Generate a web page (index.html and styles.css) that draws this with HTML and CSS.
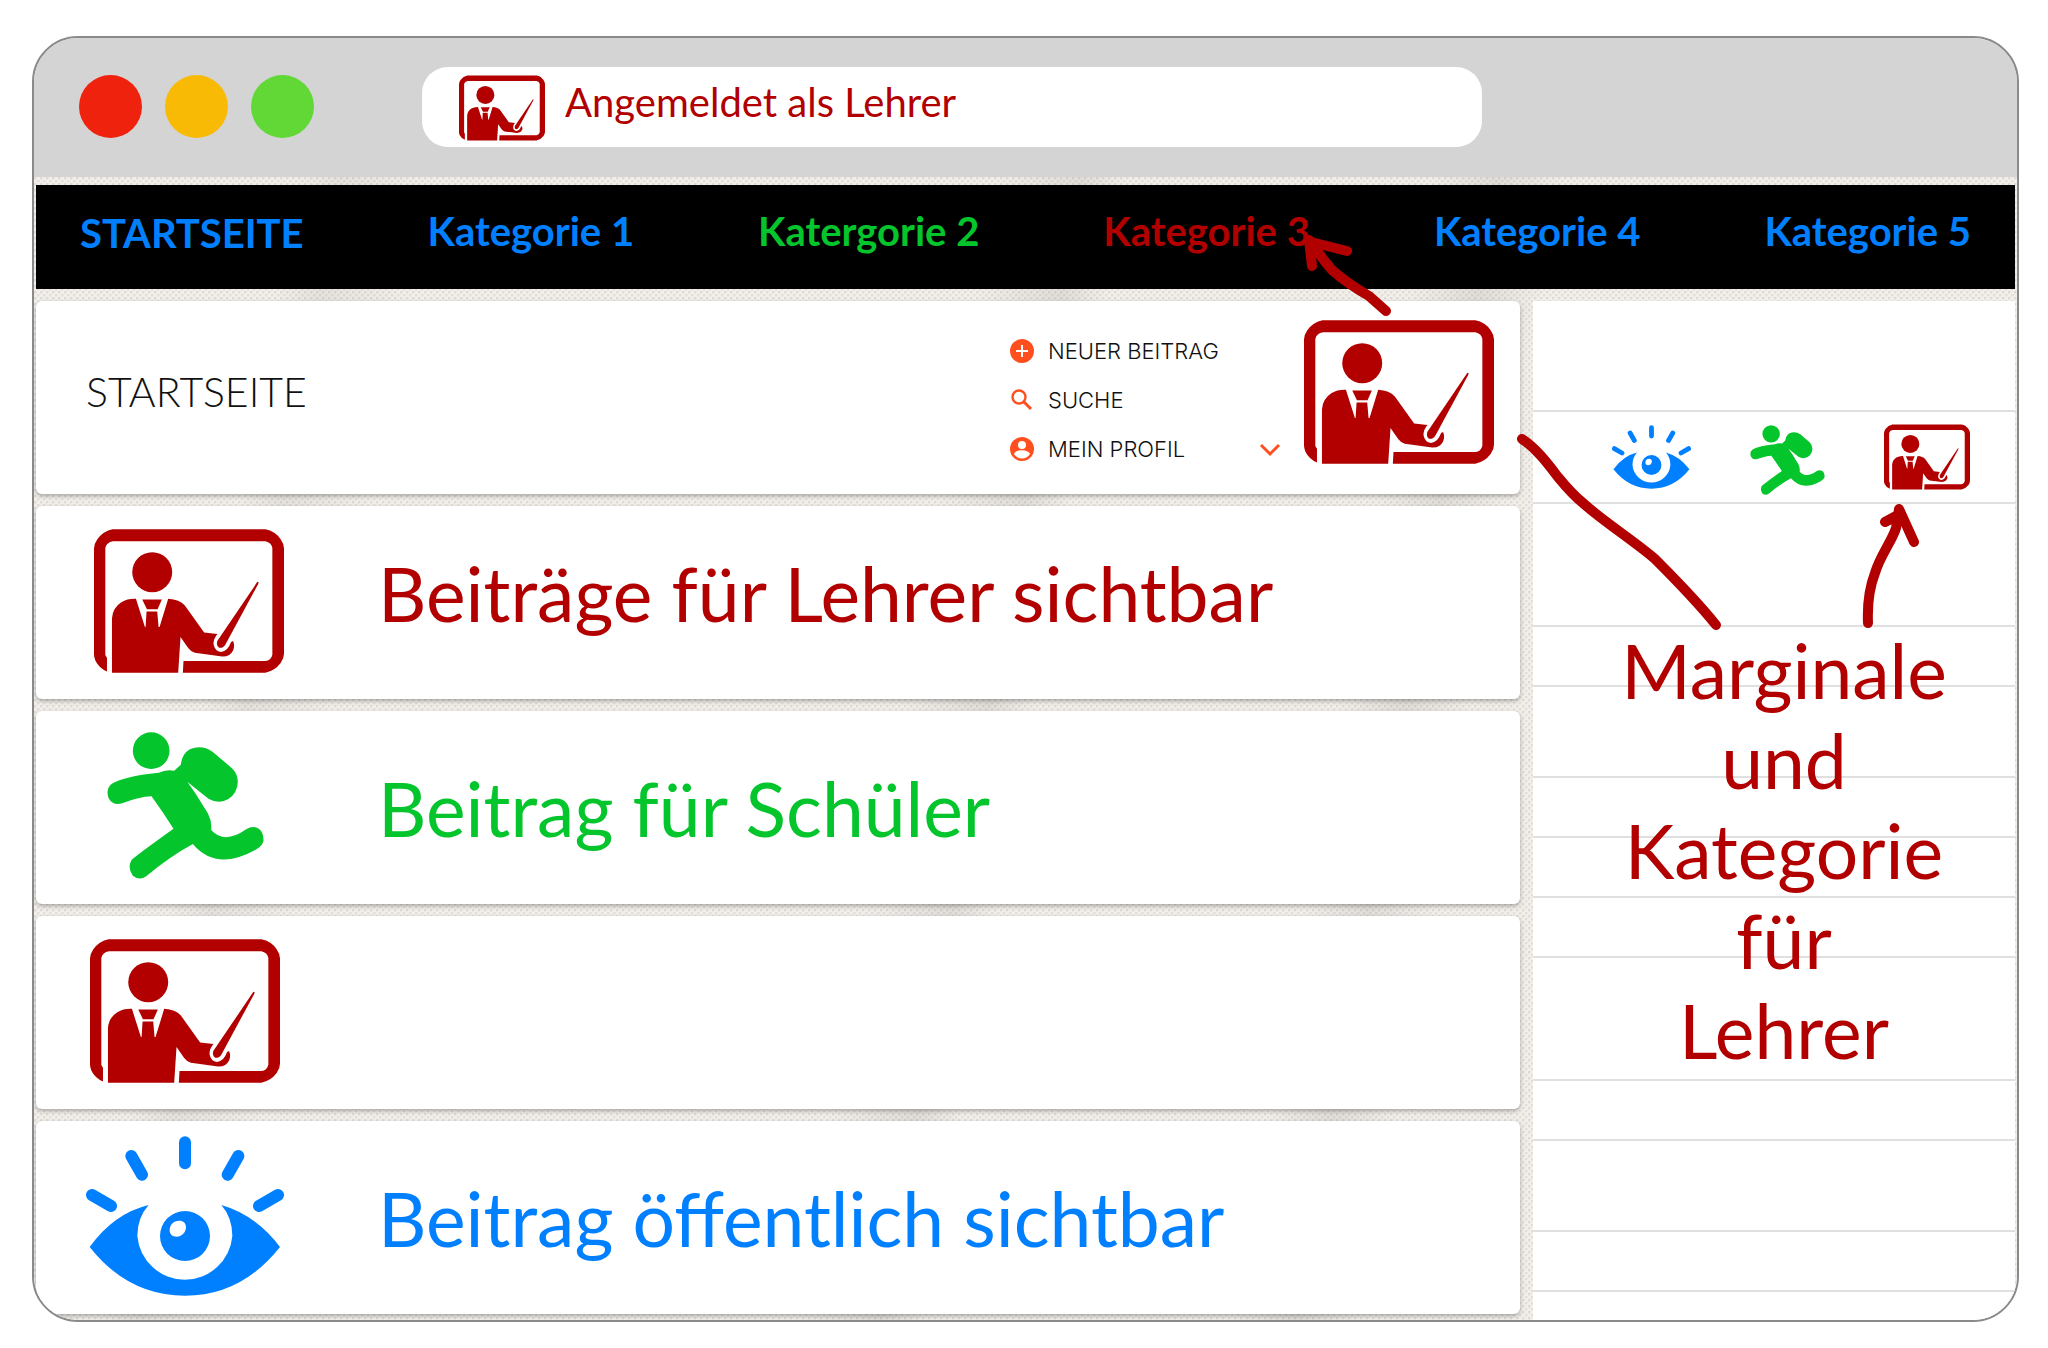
FILE: index.html
```html
<!DOCTYPE html>
<html lang="de">
<head>
<meta charset="utf-8">
<title>Startseite</title>
<link rel="stylesheet" href="styles.css">
</head>
<body>
<svg class="sprite" aria-hidden="true">
  <symbol id="teacher" viewBox="105 88 571 431">
    <path fill-rule="evenodd" d="M161 88H620Q650 94 666 118Q676 132 676 146V462Q676 476 666 490Q648 514 620 519H372L374 484H620Q637 482 641 465V144Q638 128 620 124H162Q143 127 139 144V466L144 474V515Q120 505 109 482Q105 472 105 464V146Q105 132 115 118Q132 94 161 88Z"/>
    <circle cx="280" cy="217" r="60"/>
    <path d="M159 519V355Q161 324 187 307Q206 296 231 297L258 382H260L263 335H295L299 382H302L328 297Q362 299 378 317L436 398L476 403Q464 417 464 433Q468 455 487 457Q507 455 517 427L523 424Q529 440 523 452Q514 471 490 470L408 459Q396 456 388 445L365 412L358 519Z"/>
    <path d="M250 299H309L296 328H264Z"/>
    <path d="M596 246L600 247L598 253L500 434Q493 446 481 444Q471 437 476 423Z"/>
  </symbol>
  <symbol id="student" viewBox="143 66 470 441">
    <circle cx="275" cy="122" r="55"/>
    <path d="M298 188Q320 177 344 182L364 164Q367 132 391 118Q426 103 459 125L519 176Q540 198 533 230Q525 262 493 273Q469 279 447 266L384 216L373 200Q410 250 445 310Q458 334 455 360Q495 404 560 358Q580 345 598 356Q613 366 612 394Q607 410 587 420Q470 485 400 402Q330 440 260 499Q240 513 220 497Q203 475 216 450Q226 439 342 356Q312 309 276 259Q240 260 188 280Q160 288 147 264Q138 238 156 222Q190 199 298 188Z"/>
  </symbol>
  <symbol id="eye" viewBox="79 83 594 478">
    <path d="M90 415Q163 314 267 289Q233 327 233 382A143 143 0 0 0 518 382Q518 327 485 289Q589 319 661 415Q545 561 376 561Q205 561 90 415Z"/>
    <path fill-rule="evenodd" d="M376 307A75 75 0 1 0 376 457A75 75 0 1 0 376 307ZM358 336C372 336 379 344 379 356C378 373 366 384 351 384C338 384 330 377 330 365C330 348 342 336 358 336Z"/>
    <g fill="none" stroke="currentColor" stroke-width="36" stroke-linecap="round"><path d="M376 101V164M215 142L247 198M536 142L504 198M97 259L154 292M655 259L598 292"/></g>
  </symbol>
</svg>

<div class="browser">
  <header class="titlebar">
    <div class="dots"><span class="dot red"></span><span class="dot yellow"></span><span class="dot green"></span></div>
    <label class="address">
      <svg class="icon small teacher" aria-hidden="true"><use href="#teacher"/></svg>
      <input type="text" value="Angemeldet als Lehrer" aria-label="Adresse" readonly>
    </label>
  </header>

  <div class="page">
    <nav class="nav">
      <a class="home" href="#">STARTSEITE</a>
      <a href="#">Kategorie 1</a>
      <a class="for-student" href="#">Katergorie 2</a>
      <a class="for-teacher" href="#">Kategorie 3</a>
      <a href="#">Kategorie 4</a>
      <a href="#">Kategorie 5</a>
    </nav>

    <div class="columns">
      <main class="posts">
        <section class="card head">
          <h1>STARTSEITE</h1>
          <div class="menu">
            <a href="#"><svg viewBox="0 0 24 24" aria-hidden="true"><path d="M12 0a12 12 0 1 0 0 24a12 12 0 1 0 0-24zM11 6h2v5h5v2h-5v5h-2v-5H6v-2h5z"/></svg>NEUER BEITRAG</a>
            <a href="#"><svg viewBox="0 0 24 24" aria-hidden="true"><g fill="none" stroke="currentColor"><circle cx="9" cy="9" r="6.5" stroke-width="2.4"/><path d="M14 14L21 21" stroke-width="3"/></g></svg>SUCHE</a>
            <button type="button"><svg viewBox="0 0 24 24" aria-hidden="true"><path fill-rule="evenodd" d="M12 0a12 12 0 1 0 0 24a12 12 0 1 0 0-24zM12 4a4 4 0 1 1 0 8a4 4 0 1 1 0-8zM4 17c2-5 14-5 16 0c-4 6-12 6-16 0z"/></svg>MEIN PROFIL<svg class="chevron" viewBox="0 0 24 24" aria-hidden="true"><path d="M3 8L12 17L21 8" fill="none" stroke="currentColor" stroke-width="3"/></svg></button>
          </div>
          <svg class="icon large teacher" aria-hidden="true"><use href="#teacher"/></svg>
        </section>
        <article class="card post lead for-teacher">
          <div class="figure"><svg class="icon large teacher" aria-hidden="true"><use href="#teacher"/></svg></div>
          <h2>Beiträge für Lehrer sichtbar</h2>
        </article>
        <article class="card post for-student">
          <div class="figure"><svg class="icon runner" aria-hidden="true"><use href="#student"/></svg></div>
          <h2>Beitrag für Schüler</h2>
        </article>
        <article class="card post for-teacher">
          <div class="figure"><svg class="icon large teacher" aria-hidden="true"><use href="#teacher"/></svg></div>
        </article>
        <article class="card post for-all">
          <div class="figure"><svg class="icon watcher" aria-hidden="true"><use href="#eye"/></svg></div>
          <h2>Beitrag öffentlich sichtbar</h2>
        </article>
      </main>

      <aside class="sidebar">
        <div class="row tall"></div>
        <div class="row audience">
          <svg class="icon eye-small for-all" aria-hidden="true"><use href="#eye"/></svg>
          <svg class="icon runner-small for-student" aria-hidden="true"><use href="#student"/></svg>
          <svg class="icon small teacher" aria-hidden="true"><use href="#teacher"/></svg>
        </div>
        <div class="row tall"></div>
        <div class="row"></div>
        <div class="row medium"></div>
        <div class="row"></div>
        <div class="row"></div>
        <div class="row"></div>
        <div class="row tall"></div>
        <div class="row"></div>
        <div class="row medium"></div>
        <div class="row"></div>
        <p class="note">Marginale<br>und<br>Kategorie<br>für<br>Lehrer</p>
      </aside>
    </div>
  </div>

  <svg class="arrows" viewBox="1288 226 660 412" aria-hidden="true">
    <path d="M1386 311L1369 296C1357 289 1342 279 1332 270C1324 261 1317 251 1311 242L1347 251M1309 240L1312 266"/>
    <path d="M1522 439C1536 448 1548 464 1558 477C1567 488 1573 495 1583 503C1600 519 1637 543 1655 559C1678 582 1700 605 1716 625"/>
    <path d="M1868 623C1867 600 1870 586 1875 573C1880 556 1892 541 1896 528L1899 509L1914 542M1885 522L1898 515"/>
  </svg>
</div>
</body>
</html>
```

FILE: styles.css
```css
* { box-sizing: border-box; }

body {
  margin: 0;
  padding: 36px 29px 24px 32px;
  background: #fff;
  font-family: Lato, Carlito, sans-serif;
  color: #b20000;
}

h1, h2, p { margin: 0; font-weight: 400; }
a { text-decoration: none; }

.sprite { position: absolute; width: 0; height: 0; }

.browser {
  position: relative;
  border: 2px solid #8a8a8a;
  border-radius: 46px;
  overflow: hidden;
}

.titlebar {
  display: flex;
  align-items: center;
  gap: 108px;
  height: 139px;
  padding: 0 45px 2px;
  background: #d4d4d4;
}
.dots { display: flex; gap: 23px; }
.dot { width: 63px; height: 63px; border-radius: 50%; }
.red { background: #ef220d; }
.yellow { background: #f8ba05; }
.green { background: #61d836; }

.address {
  display: flex;
  align-items: center;
  gap: 20px;
  flex: 0 1 1060px;
  height: 80px;
  padding: 2px 37px 0;
  border-radius: 26px;
  background: #fff;
}
.address input {
  flex: 1;
  min-width: 0;
  padding: 0 0 12px;
  border: 0;
  background: none;
  font: 40px/48px Lato, Carlito, sans-serif;
  color: #b20000;
}

.icon { display: block; flex: none; fill: currentColor; }
.teacher, .for-teacher { color: #b20000; }
.for-student { color: #04c52b; }
.for-all { color: #0080ff; }
.small { width: 86px; height: 66px; }
.large { width: 190px; height: 144px; }
.runner { width: 157px; height: 147px; }
.watcher { width: 198px; height: 160px; }
.eye-small { width: 79px; height: 64px; }
.runner-small { width: 75px; height: 70px; margin-top: 6px; }

.page {
  padding: 8px 2px 0;
  background:
    linear-gradient(100deg, transparent 12%, rgba(120, 115, 110, .1) 14%, transparent 18%, transparent 44%, rgba(120, 115, 110, .14) 48%, transparent 50%, transparent 64%, rgba(120, 115, 110, .14) 67%, transparent 70%),
    radial-gradient(circle at 1px 1px, #dedad6 1px, transparent 2px) 0 0 / 6px 6px,
    radial-gradient(circle at 1px 1px, #e2deda 1px, transparent 2px) 3px 3px / 6px 6px,
    #f2efeb;
}

.nav {
  display: flex;
  justify-content: space-between;
  align-items: center;
  height: 104px;
  padding: 0 44px 12px;
  background: #000;
}
.nav a { font-size: 40px; line-height: 48px; font-weight: 700; }
.nav .home { padding-top: 4px; }
.nav a:not(.for-student, .for-teacher) { color: #0080ff; }

.columns {
  display: flex;
  gap: 13px;
  padding-top: 12px;
}
.posts {
  flex: 1;
  display: flex;
  flex-direction: column;
  gap: 12px;
  padding-bottom: 6px;
}
.card {
  display: flex;
  align-items: center;
  min-height: 193px;
  border-radius: 6px;
  background: #fff;
  box-shadow: 0 2px 4px rgba(0, 0, 0, .3);
}

.head { padding: 0 26px 12px 50px; }
.head h1 {
  flex: 1;
  font-size: 41px;
  line-height: 48px;
  font-weight: 300;
  color: #111;
}
.menu {
  display: flex;
  flex-direction: column;
  gap: 25px;
  width: 272px;
  margin-right: 22px;
  padding-top: 16px;
}
.menu a, .menu button {
  display: flex;
  align-items: center;
  gap: 14px;
  padding: 0;
  border: 0;
  background: none;
  font: 300 22px/24px Inter, sans-serif;
  color: #111;
}
.menu svg { width: 24px; height: 24px; fill: currentColor; color: #ff4f1f; }
.menu .chevron { margin-left: auto; }

.post { padding-left: 50px; }
.figure {
  display: flex;
  justify-content: center;
  width: 198px;
  padding-bottom: 4px;
}
.lead .figure { justify-content: flex-end; }
.post h2 {
  margin-left: 94px;
  font-size: 75px;
  line-height: 90px;
}
.post.lead h2 { padding-bottom: 20px; }

.sidebar {
  position: relative;
  flex: 0 0 482px;
  background: #fff;
}
.row { height: 60px; border-bottom: 2px solid #e0e0e0; }
.row.medium { height: 91px; }
.row.tall { height: 123px; }
.row.tall:first-child { height: 111px; }
.row.audience {
  display: flex;
  align-items: center;
  justify-content: space-between;
  height: 92px;
  padding: 0 45px 0 79px;
}
.note {
  position: absolute;
  top: 324px;
  left: 0;
  width: 100%;
  padding-left: 20px;
  text-align: center;
  font-size: 75px;
  line-height: 90px;
}

.arrows {
  position: absolute;
  top: 188px;
  right: 69px;
  width: 660px;
  height: 412px;
  fill: none;
  stroke: #b20000;
  stroke-width: 10;
  stroke-linecap: round;
  stroke-linejoin: round;
  pointer-events: none;
}
```
